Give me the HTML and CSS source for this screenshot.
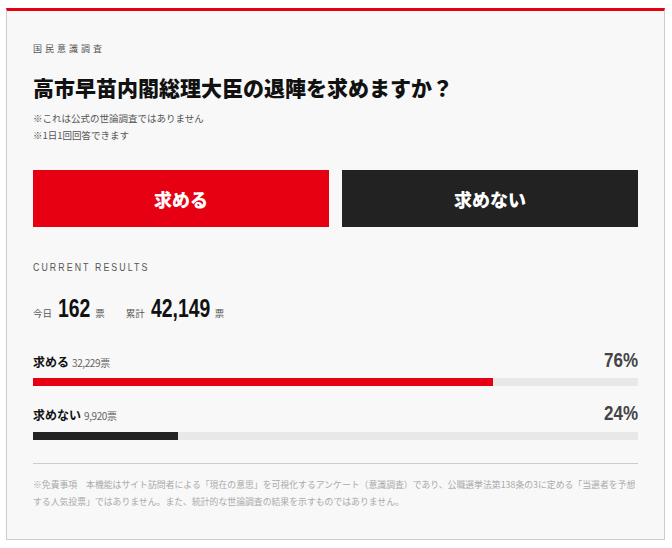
FILE: index.html
```html
<!DOCTYPE html>
<html lang="ja">
<head>
<meta charset="utf-8">
<link rel="stylesheet" href="styles.css">
</head>
<body>
<div class="card">
  <div class="eyebrow">国民意識調査</div>
  <h1 class="title">高市早苗内閣総理大臣の退陣を求めますか？</h1>
  <div class="notes">
    <p>※これは公式の世論調査ではありません</p>
    <p>※1日1回回答できます</p>
  </div>
  <div class="buttons">
    <button class="btn btn-yes">求める</button>
    <button class="btn btn-no">求めない</button>
  </div>
  <div class="section-label">CURRENT RESULTS</div>
  <div class="totals">
    <span class="t-label">今日</span><span class="t-num t-num-a">162</span><span class="t-unit">票</span>
    <span class="t-label t-gap">累計</span><span class="t-num t-num-b">42,149</span><span class="t-unit">票</span>
  </div>
  <div class="result">
    <div class="result-head">
      <div><span class="r-name">求める</span><span class="r-count">32,229票</span></div>
      <div class="r-pct">76%</div>
    </div>
    <div class="bar"><div class="fill fill-yes" style="width:76%"></div></div>
  </div>
  <div class="result">
    <div class="result-head">
      <div><span class="r-name">求めない</span><span class="r-count">9,920票</span></div>
      <div class="r-pct">24%</div>
    </div>
    <div class="bar"><div class="fill fill-no" style="width:24%"></div></div>
  </div>
  <hr class="divider">
  <p class="disclaimer">※免責事項　本機能はサイト訪問者による「現在の意思」を可視化するアンケート（意識調査）であり、公職選挙法第138条の3に定める「当選者を予想する人気投票」ではありません。また、統計的な世論調査の結果を示すものではありません。</p>
</div>
</body>
</html>
```
FILE: styles.css
```css
html, body {
  margin: 0;
  padding: 0;
  background: #ffffff;
}
body {
  padding: 8px 7px 0 6px;
  font-family: "Noto Sans CJK JP", "Noto Sans", sans-serif;
  color: #111;
}
.card {
  background: #f8f8f8;
  border: 1px solid #cccccc;
  border-top: 3px solid #e60012;
  padding: 31px 26px 30px 26px;
  height: 532px;
  box-sizing: border-box;
}
.eyebrow {
  font-size: 9px;
  letter-spacing: 3px;
  color: #555;
  line-height: 14px;
}
.title {
  margin: 16px 0 0 0;
  font-size: 21px;
  font-weight: 900;
  line-height: 30px;
  color: #111;
}
.notes {
  margin-top: 8px;
}
.notes p {
  margin: 0;
  font-size: 9.5px;
  line-height: 17px;
  color: #555;
}
.buttons {
  display: flex;
  gap: 13px;
  margin-top: 26px;
}
.btn {
  flex: 1;
  height: 57px;
  border: none;
  font-family: "Noto Sans CJK JP", sans-serif;
  font-size: 18px;
  font-weight: 900;
  color: #fff;
  padding: 0;
}
.btn-yes { background: #e60012; }
.btn-no { background: #222222; }
.section-label {
  margin-top: 33px;
  font-family: "Liberation Sans", sans-serif;
  font-size: 11px;
  letter-spacing: 2.6px;
  color: #555;
  line-height: 14px;
  transform: scaleX(0.8);
  transform-origin: 0 50%;
}
.totals {
  margin-top: 19px;
  display: flex;
  align-items: baseline;
  height: 32px;
}
.t-label {
  font-size: 9.5px;
  color: #555;
  margin-right: 6px;
}
.t-gap { margin-left: 21px; }
.t-num {
  display: inline-block;
  font-family: "Liberation Sans", sans-serif;
  font-weight: 700;
  font-size: 26.5px;
  color: #111;
  transform: scaleX(0.73);
  transform-origin: 0 50%;
}
.t-num-a { margin-right: -12px; }
.t-num-b { margin-right: -22px; }
.t-unit {
  font-size: 9.5px;
  color: #555;
  margin-left: 5px;
}
.result {
  margin-top: 21px;
}
.result + .result { margin-top: 13px; }
.result-head {
  display: flex;
  justify-content: space-between;
  align-items: flex-end;
  height: 26px;
}
.r-name {
  font-size: 12px;
  font-weight: 700;
  color: #111;
}
.r-count {
  font-size: 10px;
  color: #666;
  margin-left: 3px;
  letter-spacing: -0.4px;
}
.r-pct {
  display: inline-block;
  font-family: "Liberation Sans", sans-serif;
  font-weight: 700;
  font-size: 20px;
  color: #444;
  line-height: 24px;
  transform: scaleX(0.85);
  transform-origin: 100% 50%;
}
.bar {
  margin-top: 6px;
  height: 8px;
  background: #e8e8e8;
}
.result + .result .bar { margin-top: 7px; }
.fill { height: 100%; }
.fill-yes { background: #e60012; }
.fill-no { background: #222222; }
.divider {
  margin: 23px 0 0 0;
  border: none;
  border-top: 1px solid #cccccc;
}
.disclaimer {
  margin: 12px 0 0 0;
  font-size: 8.85px;
  line-height: 17px;
  color: #aaaaaa;
}
```
